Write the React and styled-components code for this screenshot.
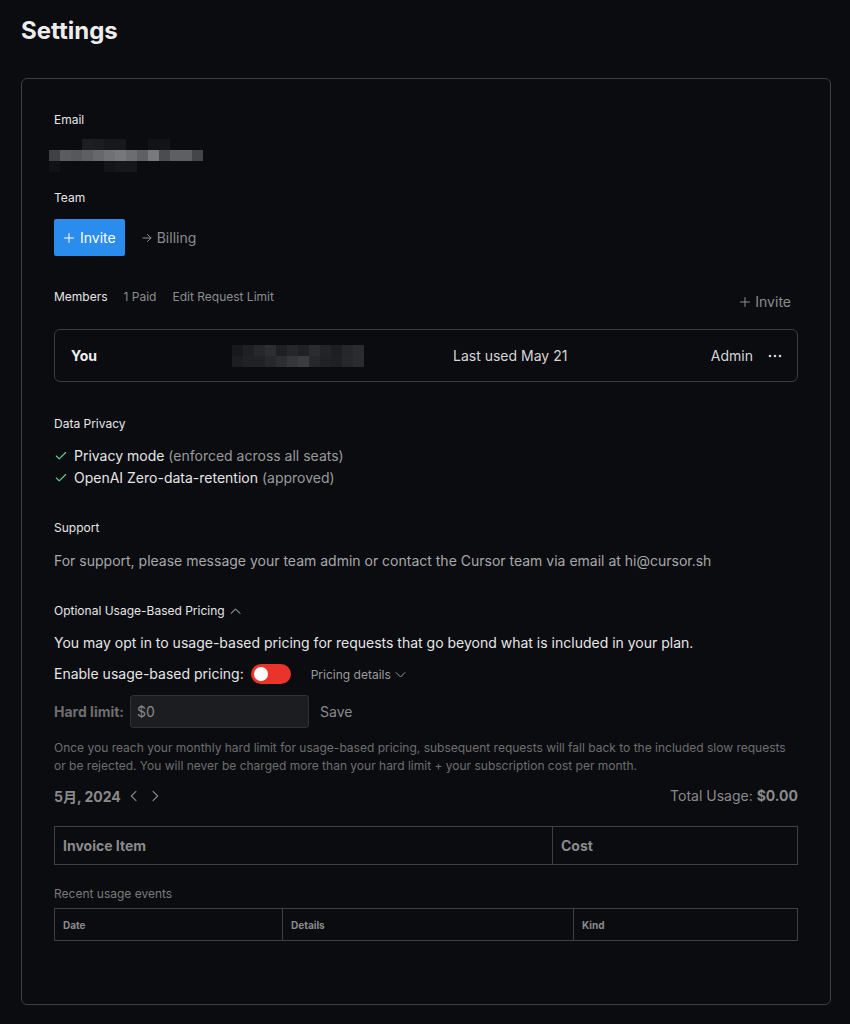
import React from "react";
import styled, { createGlobalStyle } from "styled-components";

const GlobalStyle = createGlobalStyle`
  html, body {
    margin: 0;
    padding: 0;
    background: #0a0c10;
  }
  body {
    font-family: Inter, "Noto Sans", "Noto Sans CJK SC", sans-serif;
    color: #e6e6e6;
    -webkit-font-smoothing: antialiased;
  }
`;

const Page = styled.div`
  padding: 16px 20px 20px 21px;
  width: 810px;
`;

const Title = styled.h1`
  margin: 0 0 32px;
  font-size: 24px;
  line-height: 30px;
  font-weight: 700;
  color: #ededed;
`;

const Card = styled.div`
  border: 1px solid #3c3f44;
  border-radius: 6px;
  padding: 33px 32px 63px 32px;
  display: flex;
  flex-direction: column;
`;

const Label = styled.div`
  font-size: 12px;
  line-height: 16px;
  color: ${(p) => (p.$muted ? "#7a7a7a" : "#e6e6e6")};
`;

const Section = styled.div`
  margin-top: ${(p) => p.$mt || 0}px;
`;

const Row = styled.div`
  display: flex;
  align-items: center;
  gap: ${(p) => p.$gap || 0}px;
`;

const PrimaryButton = styled.button`
  display: inline-flex;
  align-items: center;
  gap: 5px;
  height: 37px;
  padding: 0 9px;
  border: 0;
  border-radius: 2px;
  background: #2a8cec;
  color: #fff;
  font-family: inherit;
  font-size: 14px;
`;

const GhostLink = styled.span`
  display: inline-flex;
  align-items: center;
  gap: 4px;
  font-size: ${(p) => p.$size || 14}px;
  color: ${(p) => p.$color || "#8c8c8c"};
`;

const BillingLink = styled(GhostLink)`
  margin-left: -2px;
`;

const MemberHead = styled.div`
  display: flex;
  justify-content: space-between;
  align-items: flex-start;
  margin-top: 33px;
`;

const HeadInvite = styled(GhostLink)`
  margin-top: 4px;
  margin-right: 7px;
`;

const Tabs = styled.div`
  display: flex;
  gap: 16px;
  font-size: 12px;
  line-height: 16px;
  color: #8c8c8c;
  & > span:first-child {
    color: #e6e6e6;
  }
`;

const MemberCard = styled.div`
  margin-top: 19px;
  height: 51px;
  border: 1px solid #3a3d42;
  border-radius: 6px;
  display: grid;
  grid-template-columns: 161px 221px 1fr auto;
  align-items: center;
  padding: 0 15px 0 16px;
  font-size: 14px;
  color: #d6d6d6;
`;

const Strong = styled.span`
  font-weight: 700;
  font-size: ${(p) => p.$size || 14}px;
  color: ${(p) => p.$color || "#f0f0f0"};
`;

const CheckItem = styled.div`
  display: flex;
  align-items: center;
  gap: 6px;
  font-size: 14px;
  line-height: 22px;
  color: #e6e6e6;
  & em {
    font-style: normal;
    color: #9a9a9a;
  }
`;

const Body = styled.p`
  margin: 0;
  font-size: 14px;
  line-height: 20px;
  color: ${(p) => p.$color || "#a8a8a8"};
`;

const Toggle = styled.div`
  width: 40px;
  height: 20px;
  margin: 0 20px 0 7px;
  border-radius: 10px;
  background: #e8342a;
  display: flex;
  align-items: center;
  padding: 0 3px;
  box-sizing: border-box;
  &::after {
    content: "";
    width: 14px;
    height: 14px;
    border-radius: 50%;
    background: #fff;
  }
`;

const HardLabel = styled(Strong)`
  margin-right: -5px;
`;

const Input = styled.div`
  width: 179px;
  height: 33px;
  box-sizing: border-box;
  border: 1px solid #2e3135;
  border-radius: 3px;
  background: #1b1d21;
  display: flex;
  align-items: center;
  padding: 0 6px;
  font-size: 14px;
  color: #8a8a8a;
`;

const Help = styled.p`
  margin: 0;
  max-width: 736px;
  font-size: 12px;
  line-height: 18px;
  color: #6e6e6e;
`;

const SpreadRow = styled(Row)`
  justify-content: space-between;
`;

const Table = styled.div`
  display: grid;
  grid-template-columns: ${(p) => p.$cols};
  border: 1px solid #3d4045;
  height: ${(p) => p.$h}px;
  box-sizing: border-box;
`;

const Cell = styled.div`
  display: flex;
  align-items: center;
  padding-left: 8px;
  font-size: ${(p) => p.$size}px;
  font-weight: 700;
  color: #8a8a8a;
  & + & {
    border-left: 1px solid #3d4045;
  }
`;

const Mosaic = styled.svg`
  display: block;
  margin-left: ${(p) => p.$shift || 0}px;
`;

const Pixelated = ({ shades, size = 11, shift }) => (
  <Mosaic $shift={shift} width={shades[0].length * size} height={shades.length * size}>
    {shades.map((row, r) =>
      row.map((c, i) =>
        c ? <rect key={`${r}-${i}`} x={i * size} y={r * size} width={size} height={size} fill={c} /> : null
      )
    )}
  </Mosaic>
);

const emailShades = [
  [null, null, null, "#1c1e22", "#1a1c20", "#16181c", "#16181c", null, null, "#111317", "#121418", null, null, null],
  ["#3f4144", "#5a5c5f", "#56585b", "#5d5f62", "#66686b", "#6f7174", "#75777a", "#6b6d70", "#5e6063", "#77797c", "#4a4c4f", "#5d5f62", "#5d5f62", "#434548"],
  ["#101216", null, null, null, null, "#121418", "#15171b", "#15171b", null, null, null, null, null, null],
];

const memberShades = [
  ["#17191d", "#1e2024", "#26282c", "#2c2e32", "#1e2024", "#25272b", "#1f2125", "#2a2c30", "#222428", "#1c1e22", "#25272b", "#2a2c30"],
  ["#1c1e22", "#202226", "#202226", "#26282c", "#2c2e32", "#35373b", "#3a3c40", "#26282c", "#202226", "#1e2024", "#26282c", "#2a2c30"],
];

const Check = () => (
  <svg width="14" height="14" viewBox="0 0 24 24" fill="none" stroke="#5fd39a" strokeWidth="2" strokeLinecap="round" strokeLinejoin="round">
    <path d="M20 6 9 17l-5-5" />
  </svg>
);

const Chevron = ({ dir = "down", size = 12, color = "#9a9a9a" }) => {
  const d = {
    down: "m5 9 7 7 7-7",
    up: "m19 15-7-7-7 7",
    left: "m15 19-7-7 7-7",
    right: "m9 19 7-7-7-7",
  }[dir];
  return (
    <svg width={size} height={size} viewBox="0 0 24 24" fill="none" stroke={color} strokeWidth="1.6" strokeLinecap="round" strokeLinejoin="round">
      <path d={d} />
    </svg>
  );
};

const Plus = ({ color }) => (
  <svg width="12" height="12" viewBox="0 0 24 24" fill="none" stroke={color} strokeWidth="2" strokeLinecap="round">
    <path d="M12 3v18M3 12h18" />
  </svg>
);

const Arrow = () => (
  <svg width="12" height="12" viewBox="0 0 24 24" fill="none" stroke="#8c8c8c" strokeWidth="2" strokeLinecap="round" strokeLinejoin="round">
    <path d="M4 12h16M13 5l7 7-7 7" />
  </svg>
);

const Dots = () => (
  <svg width="14" height="4" viewBox="0 0 14 4">
    <circle cx="2" cy="2" r="1.3" fill="#d6d6d6" />
    <circle cx="7" cy="2" r="1.3" fill="#d6d6d6" />
    <circle cx="12" cy="2" r="1.3" fill="#d6d6d6" />
  </svg>
);

export default function App() {
  return (
    <>
      <GlobalStyle />
      <Page>
        <Title>Settings</Title>
        <Card>
          <Label>Email</Label>
          <Section $mt={11}>
            <Pixelated shades={emailShades} shift={-5} />
          </Section>

          <Section $mt={18}>
            <Label>Team</Label>
          </Section>
          <Section $mt={13}>
            <Row $gap={18}>
              <PrimaryButton>
                <Plus color="#fff" />
                Invite
              </PrimaryButton>
              <BillingLink>
                <Arrow />
                Billing
              </BillingLink>
            </Row>
          </Section>

          <MemberHead>
            <Tabs>
              <span>Members</span>
              <span>1 Paid</span>
              <span>Edit Request Limit</span>
            </Tabs>
            <HeadInvite>
              <Plus color="#8c8c8c" />
              Invite
            </HeadInvite>
          </MemberHead>

          <MemberCard>
            <Strong>You</Strong>
            <Pixelated shades={memberShades} />
            <span>Last used May 21</span>
            <Row $gap={15}>
              <span>Admin</span>
              <Dots />
            </Row>
          </MemberCard>

          <Section $mt={34}>
            <Label>Data Privacy</Label>
          </Section>
          <Section $mt={13}>
            <CheckItem>
              <Check />
              <span>
                Privacy mode <em>(enforced across all seats)</em>
              </span>
            </CheckItem>
            <CheckItem>
              <Check />
              <span>
                OpenAI Zero-data-retention <em>(approved)</em>
              </span>
            </CheckItem>
          </Section>

          <Section $mt={31}>
            <Label>Support</Label>
          </Section>
          <Section $mt={15}>
            <Body>For support, please message your team admin or contact the Cursor team via email at hi@cursor.sh</Body>
          </Section>

          <Section $mt={32}>
            <Row $gap={3}>
              <Label>Optional Usage-Based Pricing</Label>
              <Chevron dir="up" size={15} color="#d0d0d0" />
            </Row>
          </Section>
          <Section $mt={14}>
            <Body $color="#e6e6e6">
              You may opt in to usage-based pricing for requests that go beyond what is included in your plan.
            </Body>
          </Section>
          <Section $mt={11}>
            <Row>
              <Body $color="#e6e6e6">Enable usage-based pricing:</Body>
              <Toggle />
              <GhostLink $size={12} $color="#9a9a9a" style={{ gap: 2 }}>
                Pricing details
                <Chevron dir="down" size={15} />
              </GhostLink>
            </Row>
          </Section>
          <Section $mt={11}>
            <Row $gap={11}>
              <HardLabel $color="#6e6e6e">Hard limit:</HardLabel>
              <Input>$0</Input>
              <GhostLink $color="#8a8a8a">Save</GhostLink>
            </Row>
          </Section>
          <Section $mt={11}>
            <Help>
              Once you reach your monthly hard limit for usage-based pricing, subsequent requests will fall back to the
              included slow requests or be rejected. You will never be charged more than your hard limit + your
              subscription cost per month.
            </Help>
          </Section>
          <Section $mt={11}>
            <SpreadRow>
              <Row $gap={5}>
                <Strong $color="#8a8a8a">5月, 2024</Strong>
                <Chevron dir="left" size={16} color="#8a8a8a" />
                <Chevron dir="right" size={16} color="#8a8a8a" />
              </Row>
              <Body $color="#8a8a8a">
                Total Usage: <Strong $color="#8a8a8a">$0.00</Strong>
              </Body>
            </SpreadRow>
          </Section>
          <Section $mt={20}>
            <Table $cols="497px 1fr" $h={39}>
              <Cell $size={14}>Invoice Item</Cell>
              <Cell $size={14}>Cost</Cell>
            </Table>
          </Section>
          <Section $mt={21}>
            <Label $muted>Recent usage events</Label>
          </Section>
          <Section $mt={6}>
            <Table $cols="227px 291px 1fr" $h={33}>
              <Cell $size={10}>Date</Cell>
              <Cell $size={10}>Details</Cell>
              <Cell $size={10}>Kind</Cell>
            </Table>
          </Section>
        </Card>
      </Page>
    </>
  );
}
